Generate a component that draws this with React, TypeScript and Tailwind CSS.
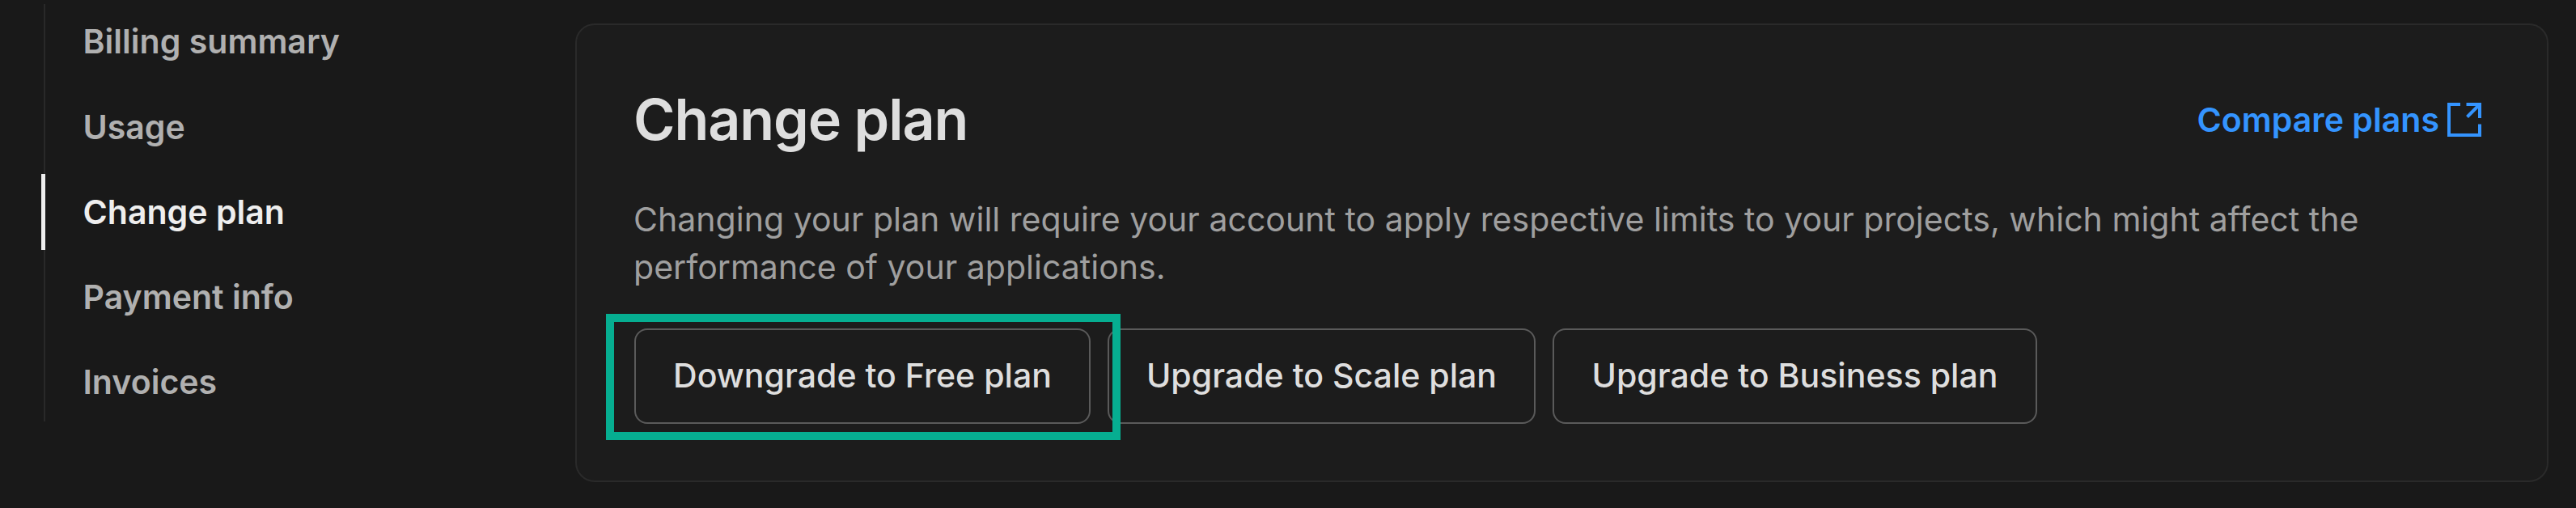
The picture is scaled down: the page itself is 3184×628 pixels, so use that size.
const items = ["Billing summary", "Usage", "Change plan", "Payment info", "Invoices"];
const active = "Change plan";
const itemBase = "relative flex h-[94px] shrink-0 items-center pl-[46.5px] text-[41.07px] font-semibold";
const button =
  "flex h-[118px] shrink-0 items-center justify-center rounded-[16px] border-2 border-[#5a5a5a] text-[41.07px] font-medium text-[#dedede] whitespace-nowrap";

function ExternalIcon() {
  return (
    <svg className="ml-[10px] h-[42px] w-[42px]" viewBox="0 0 42 42" fill="none" stroke="currentColor" strokeWidth="4">
      <path d="M16 2H2V40H40V26.5" />
      <path d="M23.5 2H40V19" />
      <path d="M40 2L24.5 17.5" />
    </svg>
  );
}

export default function App() {
  return (
    <div className="flex h-[628px] w-[3184px] overflow-hidden bg-[#191919] font-['Inter',sans-serif]">
      <nav className="mt-[5px] ml-[54px] flex h-[516px] w-[657px] shrink-0 flex-col gap-[11.3px] border-l-2 border-[#292929]">
        {items.map((t) => (
          <a key={t} className={t === active ? itemBase + " text-[#eeeeee]" : itemBase + " text-[#b0b0b0]"}>
            {t === active && <span className="absolute -top-px -left-[5.5px] h-full w-[5.5px] bg-[#eeeeee]" />}
            {t}
          </a>
        ))}
      </nav>
      <section className="mt-[29px] h-[567px] w-[2439px] shrink-0 rounded-[24px] border-2 border-[#2a2a2a] bg-[#1c1c1c] pr-[81px] pl-[71px] pt-[77px]">
        <div className="flex h-[80px] items-center justify-between">
          <h1 className="-ml-px text-[70px] leading-[80px] font-semibold tracking-[-1.1px] text-[#dedede]">Change plan</h1>
          <a className="flex items-center text-[41.07px] leading-[58px] font-semibold text-[#3494ff]">
            Compare plans
            <ExternalIcon />
          </a>
        </div>
        <p className="mt-[54px] -ml-px text-[41.07px] leading-[58.5px] whitespace-nowrap text-[#9f9f9f]">
          Changing your plan will require your account to apply respective limits to your projects, which might affect the
          <br />
          performance of your applications.
        </p>
        <div className="mt-[47px] flex gap-[21px]">
          <div className="relative">
            <button className={button + " w-[564px]"}>Downgrade to Free plan</button>
            <span className="absolute -top-[18px] -left-[35px] z-10 h-[156px] w-[636px] border-[10px] border-[#06ae91]" />
          </div>
          <button className={button + " w-[529px]"}>Upgrade to Scale plan</button>
          <button className={button + " w-[599px]"}>Upgrade to Business plan</button>
        </div>
      </section>
    </div>
  );
}
